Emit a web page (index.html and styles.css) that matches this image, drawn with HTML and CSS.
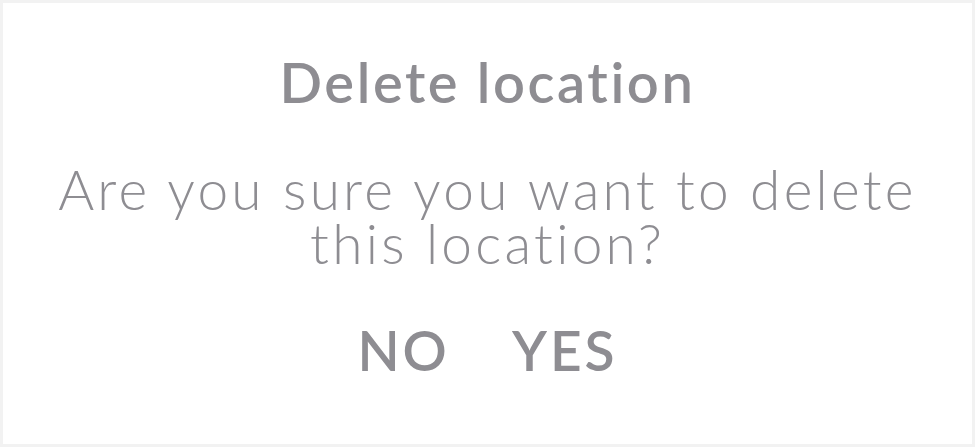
FILE: index.html
```html
<!DOCTYPE html>
<html>
<head>
<meta charset="utf-8">
<link rel="stylesheet" href="styles.css">
</head>
<body>
<div class="dialog">
  <h1 class="title">Delete location</h1>
  <p class="message">Are you sure you want to delete<br>this location?</p>
  <div class="actions">
    <button class="btn">NO</button>
    <button class="btn">YES</button>
  </div>
</div>
</body>
</html>
```

FILE: styles.css
```css
html, body {
  margin: 0;
  padding: 0;
  background: #f2f2f2;
}
body {
  padding: 3px;
  font-family: Lato, "Noto Sans", sans-serif;
  color: #8e8d92;
}
.dialog {
  background: #fff;
  height: 441px;
  display: flex;
  flex-direction: column;
  align-items: center;
  box-sizing: border-box;
  padding-top: 47px;
}
.title {
  margin: 0;
  font-size: 56px;
  font-weight: 600;
  line-height: 64px;
  letter-spacing: 2.6px;
}
.message {
  margin: 48px 0 0;
  font-size: 55px;
  font-weight: 300;
  line-height: 54px;
  text-align: center;
  letter-spacing: 3.25px;
}
.actions {
  margin-top: 48px;
  display: flex;
  gap: 62px;
}
.btn {
  border: 0;
  background: none;
  padding: 0;
  font-family: inherit;
  color: inherit;
  font-size: 55px;
  font-weight: 600;
  line-height: 64px;
  letter-spacing: 3px;
}
```
